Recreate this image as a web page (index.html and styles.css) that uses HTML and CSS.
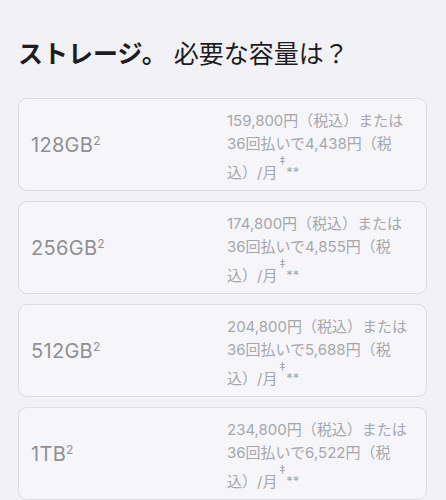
FILE: index.html
```html
<!DOCTYPE html>
<html lang="ja">
<head>
    <meta charset="UTF-8">
    <meta name="viewport" content="width=device-width, initial-scale=1.0">
    <title>ストレージ</title>
    <link rel="stylesheet" href="styles.css">
</head>
<body>
    <div class="container">
        <h2 class="title"><strong>ストレージ。</strong> 必要な容量は？</h2>

        <!-- 容量の選択肢 -->
        <div class="options">
            <div class="option">
                <span class="size">128GB<sup>2</sup></span>
                <span class="price">159,800円（税込）または 36回払いで4,438円（税込）/月<sup class="mark">‡</sup><span class="ast">**</span></span>
            </div>
            <div class="option">
                <span class="size">256GB<sup>2</sup></span>
                <span class="price">174,800円（税込）または 36回払いで4,855円（税込）/月<sup class="mark">‡</sup><span class="ast">**</span></span>
            </div>
            <div class="option">
                <span class="size">512GB<sup>2</sup></span>
                <span class="price">204,800円（税込）または 36回払いで5,688円（税込）/月<sup class="mark">‡</sup><span class="ast">**</span></span>
            </div>
            <div class="option">
                <span class="size">1TB<sup>2</sup></span>
                <span class="price">234,800円（税込）または 36回払いで6,522円（税込）/月<sup class="mark">‡</sup><span class="ast">**</span></span>
            </div>
        </div>
    </div>
</body>
</html>
```

FILE: styles.css
```css
body {
    font-family: Inter, "Noto Sans CJK JP", sans-serif;
    background-color: #f1f1f6;
    margin: 0;
    padding: 0;
}

.container {
    padding: 37px 19px 0 18px;
}

.title {
    font-size: 25px;
    line-height: 34px;
    font-weight: normal;
    color: #1d1d1f;
    margin: 0 0 27px 0;
}

.title strong {
    font-weight: bold;
}

.options {
    display: flex;
    flex-direction: column;
    gap: 10px;
}

.option {
    display: flex;
    justify-content: space-between;
    align-items: center;
    height: 93px;
    box-sizing: border-box;
    padding: 0 19px 0 12px;
    background-color: #f6f6fa;
    border: 1px solid #dcdce1;
    border-radius: 9px;
}

.size {
    font-size: 20px;
    color: #8f8f94;
    letter-spacing: 0.3px;
}

.size sup {
    font-size: 12px;
    vertical-align: 7px;
    line-height: 0;
}

.price {
    width: 180px;
    padding-top: 4px;
    font-size: 15px;
    line-height: 23px;
    color: #a6a6ab;
}

.price .mark {
    font-size: 12px;
    line-height: 1;
    vertical-align: 13px;
    margin: 0 1px 0 2px;
}

.price .ast {
    font-size: 13px;
    line-height: 1;
    vertical-align: 1px;
}
```
